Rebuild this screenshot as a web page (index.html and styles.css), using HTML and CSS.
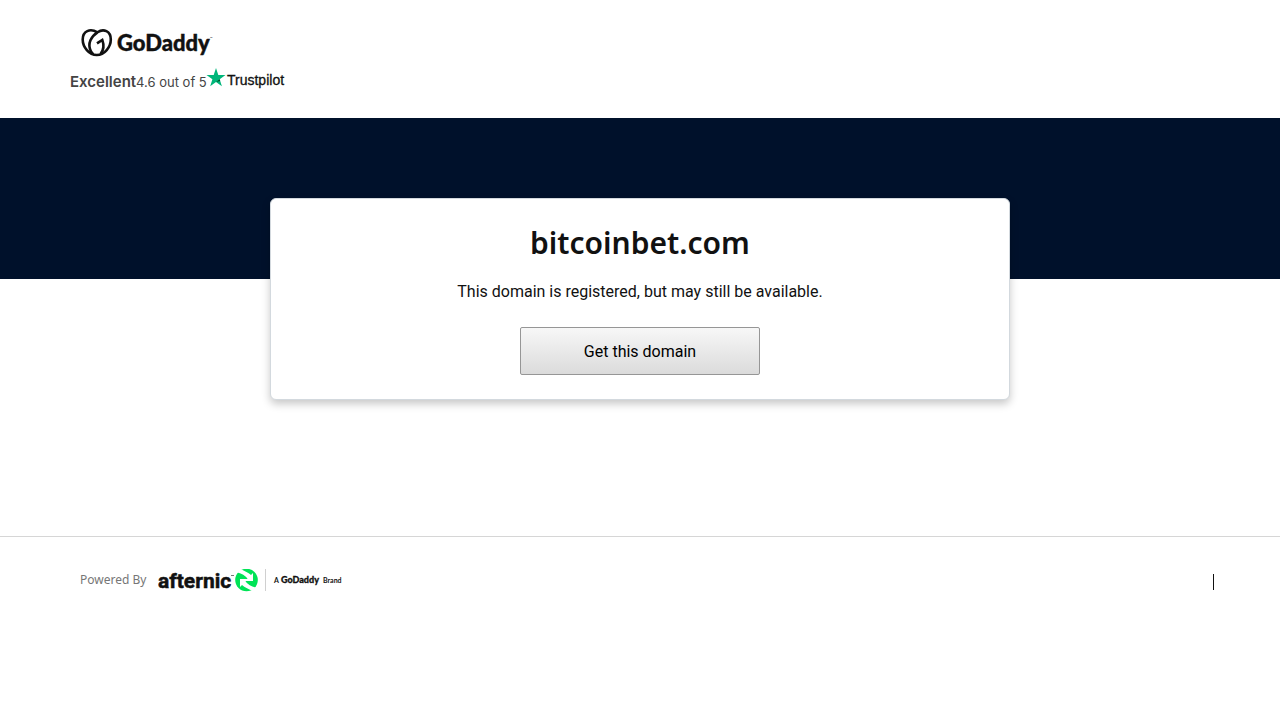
FILE: index.html
```html
<!DOCTYPE html>
<html lang="en">
<head>
<meta charset="utf-8">
<title>bitcoinbet.com</title>
<link rel="stylesheet" href="styles.css">
</head>
<body>
<header class="header">
  <svg class="logo" width="136" height="32" viewBox="0 0 136 32" role="img" aria-label="GoDaddy">
    <g fill="none" stroke="#111" stroke-width="2.6">
      <path d="M17.500 4.300C10 0 2.700 3 2.700 11.500C2.700 19 9 27 16.800 27C24.500 27 30.800 19 30.800 11.500C30.800 3 23.500 .2 17.500 4.300C10.500 8.800 8.200 15.500 10 21C10.600 23 11.700 25 13.200 26.300"/>
      <path d="M17 15.400L22.300 11.900C24.300 17.500 23.500 22.500 20.500 26"/>
    </g>
    <text class="logo-name" x="37" y="23">GoDaddy</text>
    <text class="logo-mark" x="130" y="12">™</text>
  </svg>
  <div class="rating">
    <strong class="rating-word">Excellent</strong>
    <span class="rating-score">4.6 out of 5</span>
    <svg class="trustpilot" width="82" height="22" viewBox="0 0 82 22" role="img" aria-label="Trustpilot">
      <path fill="#00b67a" d="M9 1L11.300 8H18.500L12.700 12.300L14.900 19.200L9 15L3.200 19.200L5.400 12.300L-.5 8H6.700Z"/>
      <path fill="#005128" d="M13.200 13.900L12.700 12.300L9 15Z"/>
      <text class="trustpilot-name" x="20" y="18">Trustpilot</text>
    </svg>
  </div>
</header>
<main class="main">
  <section class="card">
    <h1 class="domain">bitcoinbet.com</h1>
    <p class="message">This domain is registered, but may still be available.</p>
    <button class="button" type="button">Get this domain</button>
  </section>
</main>
<footer class="footer">
  <div class="powered">
    <span class="powered-label">Powered By</span>
    <svg class="afternic" width="190" height="24" viewBox="0 0 190 24" role="img" aria-label="Afternic, a GoDaddy brand">
      <text class="afternic-name" x="0" y="19">afternic</text>
      <path d="M73 6.500H76" stroke="#777"/>
      <circle cx="88.500" cy="11" r="11.300" fill="#00e356"/>
      <path fill="#fff" d="M81 1.500L83.500 .5C87 2.500 90 3.500 93 6L95 4V12H87L89.500 9.500C87 6.500 84 4.500 79.500 3.500Z"/>
      <path fill="#fff" d="M96 20.500L93.500 21.500C90 19.500 87 18.500 84 16L82 18V10H90L87.500 12.500C90 15.500 93 17.500 97.500 18.500Z"/>
      <path d="M107.500 0V22" stroke="#d0d0d0"/>
      <text class="brand-small" x="116" y="14">A</text>
      <text class="brand-name" x="123" y="14">GoDaddy</text>
      <text class="brand-small" x="165" y="14">Brand</text>
    </svg>
  </div>
  <span class="divider"></span>
</footer>
</body>
</html>
```

FILE: styles.css
```css
* {
  box-sizing: border-box;
}

body {
  margin: 0;
  background: #fff;
  color: #111;
  font-family: Roboto, "Noto Sans", sans-serif;
  font-size: 16px;
  line-height: 24px;
}

.header {
  display: flex;
  flex-direction: column;
  align-items: flex-start;
  gap: 7px;
  min-height: 118px;
  padding: 28px 70px 20px;
}

.logo {
  margin-left: 10px;
}

.logo-name {
  font: 900 22px Lato, sans-serif;
  fill: #111;
  stroke: #111;
  stroke-width: 0.4px;
}

.logo-mark {
  font: 4px Inter, sans-serif;
  fill: #111;
}

.rating {
  display: flex;
  color: #444;
}

.rating-word {
  padding-top: 3px;
  font-family: Inter, sans-serif;
  font-size: 15px;
  font-weight: 600;
}

.rating-score {
  padding-top: 3px;
  font-family: Inter, sans-serif;
  font-size: 13px;
}

.trustpilot-name {
  font: 14px "Liberation Sans", Arial, sans-serif;
  fill: #111;
  stroke: #111;
  stroke-width: 0.3px;
}

.trustpilot {
  overflow: visible;
}

.main {
  min-height: 418px;
  padding: 80px 20px;
  background: linear-gradient(#00112b 161px, #fff 161px);
}

.card {
  display: flex;
  flex-direction: column;
  align-items: center;
  max-width: 740px;
  margin: 0 auto;
  padding: 24px;
  border: 1px solid #d3d9de;
  border-radius: 6px;
  background: #fff;
  box-shadow: 0 4px 8px rgba(0, 0, 0, 0.22);
}

.domain {
  margin: 0 0 17px;
  font-family: "Noto Sans", sans-serif;
  font-size: 30px;
  font-weight: 600;
  line-height: 40px;
}

.message {
  margin: 0 0 23px;
  text-align: center;
}

.button {
  width: 240px;
  max-width: 100%;
  height: 48px;
  padding: 2px 6px 0;
  border: 1px solid #969696;
  border-radius: 2px;
  background: linear-gradient(#f7f7f7, #dbdbdb);
  color: #000;
  font: inherit;
  cursor: pointer;
}

.footer {
  display: flex;
  align-items: flex-start;
  justify-content: space-between;
  padding: 32px 66px 32px 80px;
  border-top: 1px solid #d6d6d6;
}

.powered {
  display: flex;
  gap: 12px;
}

.powered-label {
  color: #767676;
  font-family: "Noto Sans", sans-serif;
  font-size: 12px;
  line-height: 22px;
}

.afternic-name {
  font: 700 21px Roboto, sans-serif;
  fill: #111;
  stroke: #111;
  stroke-width: 0.5px;
}

.brand-name {
  font: 900 9px Lato, sans-serif;
  fill: #111;
  stroke: #111;
  stroke-width: 0.3px;
}

.brand-small {
  font: 700 7px Lato, sans-serif;
  fill: #111;
}

.divider {
  width: 1px;
  height: 16px;
  margin-top: 5px;
  background: #111;
}
```
